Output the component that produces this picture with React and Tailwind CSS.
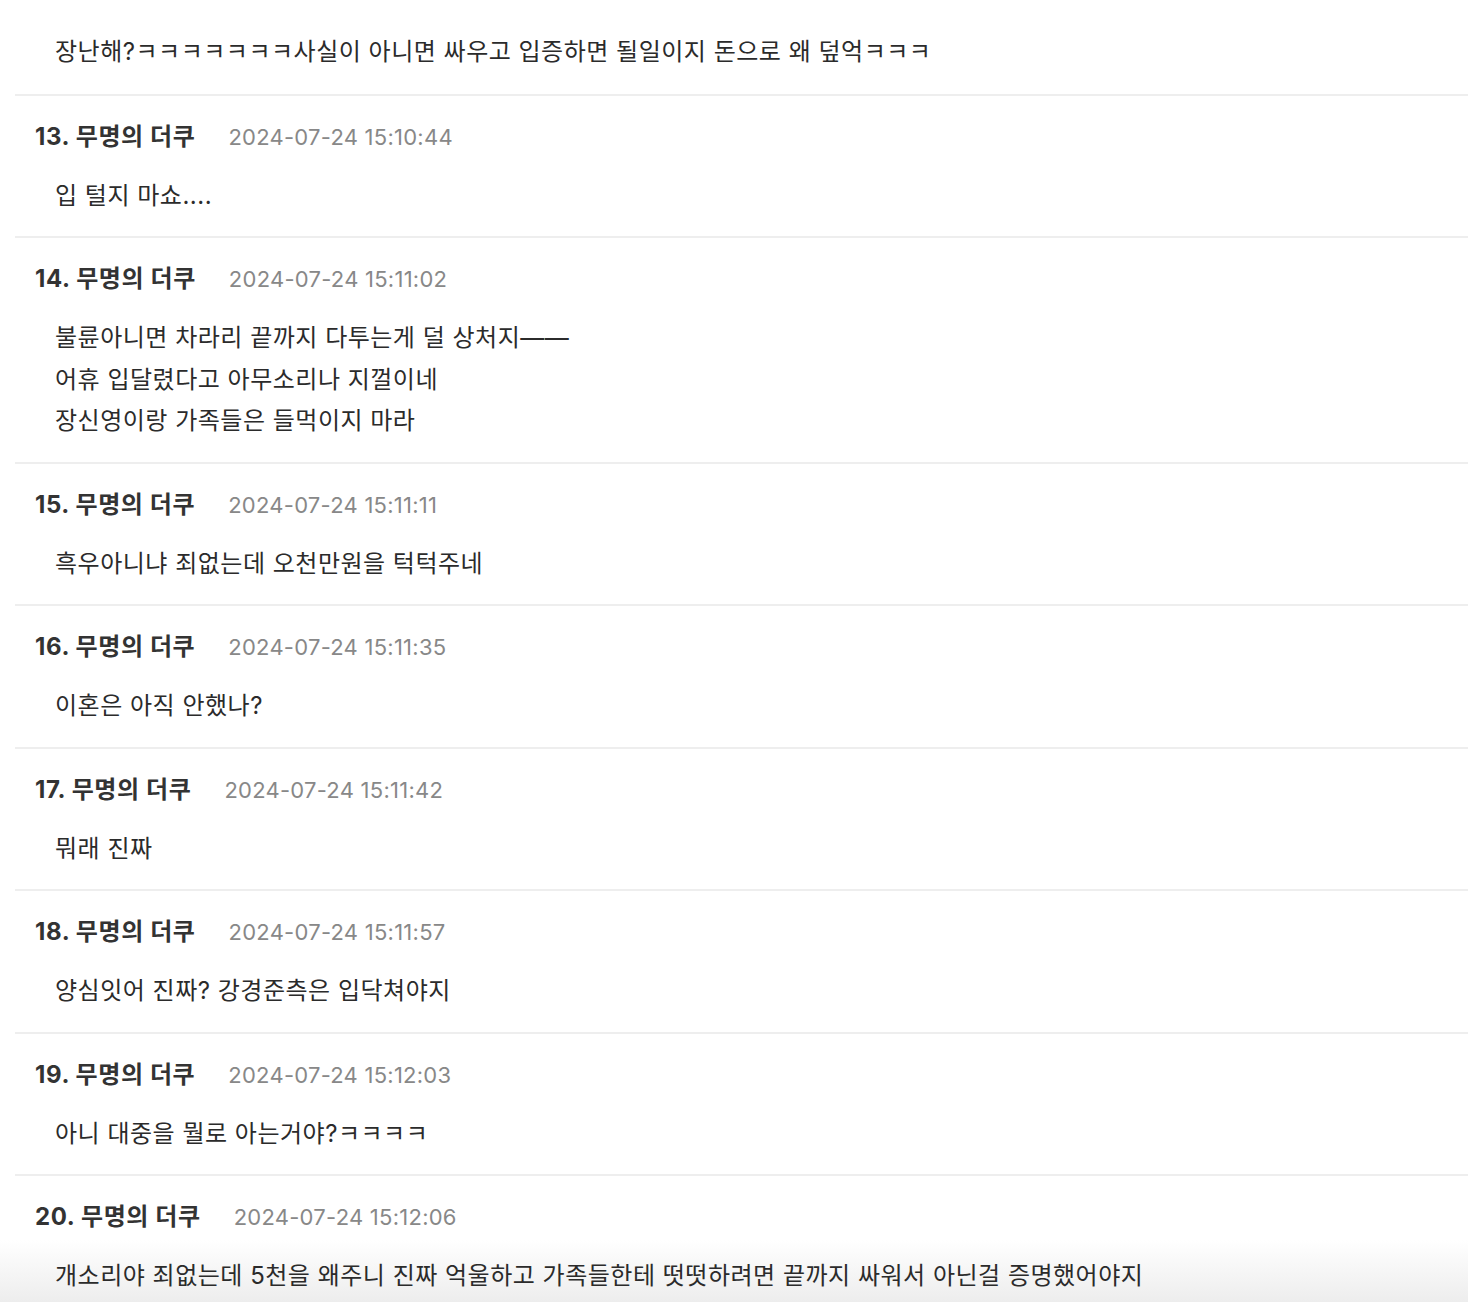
import React from "react";

const comments = [
  { n: 13, t: "2024-07-24 15:10:44", body: ["입 털지 마쇼...."] },
  { n: 14, t: "2024-07-24 15:11:02", body: ["불륜아니면 차라리 끝까지 다투는게 덜 상처지——", "어휴 입달렸다고 아무소리나 지껄이네", "장신영이랑 가족들은 들먹이지 마라"] },
  { n: 15, t: "2024-07-24 15:11:11", body: ["흑우아니냐 죄없는데 오천만원을 턱턱주네"] },
  { n: 16, t: "2024-07-24 15:11:35", body: ["이혼은 아직 안했나?"] },
  { n: 17, t: "2024-07-24 15:11:42", body: ["뭐래 진짜"] },
  { n: 18, t: "2024-07-24 15:11:57", body: ["양심잇어 진짜? 강경준측은 입닥쳐야지"] },
  { n: 19, t: "2024-07-24 15:12:03", body: ["아니 대중을 뭘로 아는거야?ㅋㅋㅋㅋ"] },
  { n: 20, t: "2024-07-24 15:12:06", body: ["개소리야 죄없는데 5천을 왜주니 진짜 억울하고 가족들한테 떳떳하려면 끝까지 싸워서 아닌걸 증명했어야지"] },
];

export default function App() {
  return (
    <div
      className="relative h-[1302px] w-full overflow-hidden bg-white text-[#2b2b2b]"
      style={{ fontFamily: 'Inter, "Noto Sans CJK KR", sans-serif' }}
    >
      <div className="pointer-events-none absolute bottom-0 left-0 h-[62px] w-full bg-gradient-to-b from-white to-[#ededed]" />
      <div className="relative z-10 ml-[15px]">
        <div className="pt-[31px] pb-[21px] pl-[40px] text-[24px] leading-[41.5px] tracking-[0.5px]">
          장난해?ㅋㅋㅋㅋㅋㅋㅋ사실이 아니면 싸우고 입증하면 될일이지 돈으로 왜 덮억ㅋㅋㅋ
        </div>
        {comments.map((c) => (
          <div key={c.n} className="border-t-2 border-[#eeeeee] pt-[25px] pb-[20px]">
            <div className="flex items-baseline gap-[33px] pl-[20px] leading-[32px]">
              <span className="text-[24px] font-bold tracking-[0.6px] text-[#333333]">
                {c.n}. 무명의 더쿠
              </span>
              <span className="text-[22px] tracking-[0.25px] text-[#888888]">{c.t}</span>
            </div>
            <div className="mt-[22px] pl-[40px] text-[24px] leading-[41.5px] tracking-[0.5px]">
              {c.body.map((l, i) => (
                <div key={i}>{l}</div>
              ))}
            </div>
          </div>
        ))}
      </div>
    </div>
  );
}
